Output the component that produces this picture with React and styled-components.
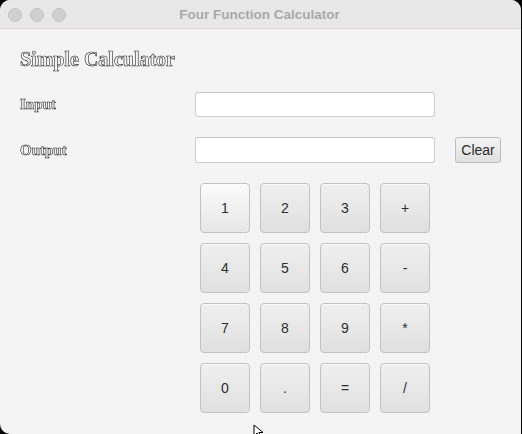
import React from "react";
import styled, { createGlobalStyle } from "styled-components";

const GlobalStyle = createGlobalStyle`
  html, body {
    margin: 0;
    padding: 0;
    background: #000;
  }
  body {
    width: 522px;
    height: 434px;
    overflow: hidden;
  }
`;

const Window = styled.div`
  position: relative;
  width: 521px;
  height: 434px;
  background: #f4f4f4;
  border-radius: 10px 10px 0 10px;
  overflow: hidden;
  display: flex;
  flex-direction: column;
`;

const TitleBar = styled.div`
  position: relative;
  height: 28px;
  flex: none;
  background: #e9e8e8;
  border-bottom: 1px solid #dcd6d4;
  display: flex;
  align-items: center;
  justify-content: center;
`;

const Lights = styled.div`
  position: absolute;
  left: 8px;
  top: 8px;
  display: flex;
  gap: 8px;
`;

const Light = styled.span`
  width: 12px;
  height: 12px;
  border-radius: 50%;
  background: #d1d0d0;
  border: 0.5px solid #c4c3c3;
`;

const Title = styled.div`
  font-family: "Liberation Sans", Arial, sans-serif;
  font-weight: bold;
  font-size: 13.5px;
  color: #a9a8a8;
  margin-left: -2px;
`;

const Content = styled.div`
  padding: 18px 0 0 20px;
  display: flex;
  flex-direction: column;
`;

const outline = `
  color: transparent;
  -webkit-text-stroke: 0.6px #2a2a2a;
  font-weight: bold;
  filter: grayscale(1);
`;

const Heading = styled.h1`
  margin: 0;
  height: 24px;
  font-family: "Liberation Serif", "Times New Roman", serif;
  font-size: 20px;
  line-height: 24px;
  ${outline}
`;

const Row = styled.div`
  display: flex;
  align-items: center;
  margin-top: ${(p) => p.$top}px;
  height: 26px;
`;

const Label = styled.label`
  width: 175px;
  font-family: "Liberation Serif", "Times New Roman", serif;
  font-size: 15px;
  ${outline}
`;

const Field = styled.input`
  box-sizing: border-box;
  width: 240px;
  height: ${(p) => p.$h}px;
  background: #fff;
  border: 1px solid #cdcdcd;
  border-top-color: #c4c4c4;
  border-radius: 3px;
  outline: none;
  padding: 0 6px;
`;

const ClearButton = styled.button`
  box-sizing: border-box;
  margin-left: 20px;
  width: 46px;
  height: 26px;
  border: 1px solid #bdbdbd;
  border-radius: 3px;
  background: linear-gradient(#f4f4f4, #e8e8e8 55%, #e0e0e0);
  font-family: "Liberation Sans", Arial, sans-serif;
  font-size: 14px;
  color: #2a2a2a;
  padding: 0;
`;

const Keypad = styled.div`
  margin: 20px 0 0 180px;
  display: grid;
  grid-template-columns: repeat(4, 50px);
  grid-auto-rows: 50px;
  gap: 10px;
`;

const Key = styled.button`
  box-sizing: border-box;
  border: 1px solid #c2c2c2;
  border-radius: 4px;
  background: ${(p) =>
    p.$focused
      ? "linear-gradient(#fbfbfb, #f1f1f1 50%, #e6e6e6)"
      : "linear-gradient(#efefef, #e8e8e8 50%, #e0e0e0)"};
  box-shadow: inset 0 1px 0 rgba(255, 255, 255, 0.6);
  font-family: "Liberation Sans", Arial, sans-serif;
  font-size: 14px;
  color: #2e2e2e;
  padding: 0;
`;

const Cursor = styled.svg`
  position: absolute;
  left: 253px;
  top: 424px;
`;

const keys = ["1", "2", "3", "+", "4", "5", "6", "-", "7", "8", "9", "*", "0", ".", "=", "/"];

export default function App() {
  return (
    <>
      <GlobalStyle />
      <Window>
        <TitleBar>
          <Lights>
            <Light />
            <Light />
            <Light />
          </Lights>
          <Title>Four Function Calculator</Title>
        </TitleBar>
        <Content>
          <Heading>Simple Calculator</Heading>
          <Row $top={20}>
            <Label>Input</Label>
            <Field $h={25} />
          </Row>
          <Row $top={20}>
            <Label>Output</Label>
            <Field $h={26} />
            <ClearButton>Clear</ClearButton>
          </Row>
          <Keypad>
            {keys.map((k, i) => (
              <Key key={k} $focused={i === 0}>
                {k}
              </Key>
            ))}
          </Keypad>
        </Content>
        <Cursor width="12" height="14" viewBox="0 0 12 14">
          <path d="M1 1 L1 12 L4 9 L6.5 13.5 L8 12.8 L5.8 8.5 L10 8.5 Z" fill="#fff" stroke="#000" strokeWidth="1" />
        </Cursor>
      </Window>
    </>
  );
}
